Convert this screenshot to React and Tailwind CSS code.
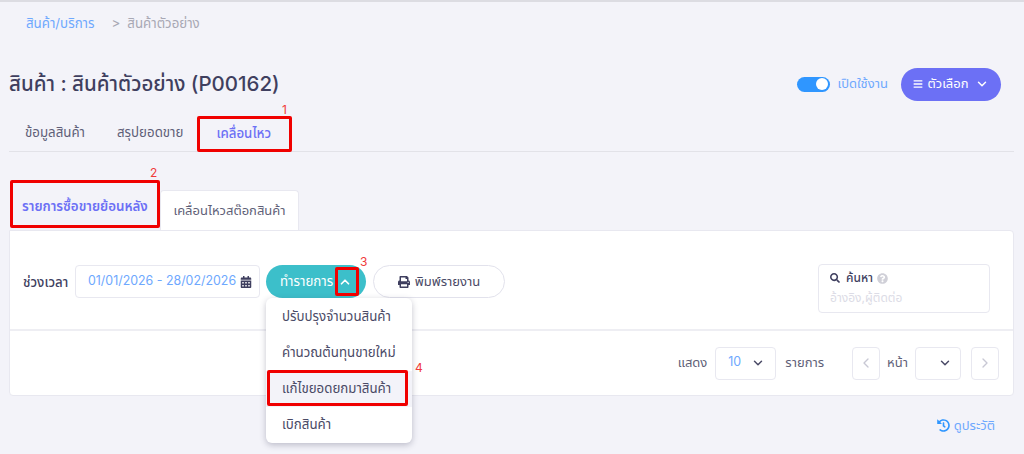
import React from 'react';
import { ChevronDown, ChevronUp, ChevronLeft, ChevronRight } from 'lucide-react';
import { FaBars, FaCalendarAlt, FaHistory, FaPrint, FaQuestionCircle, FaSearch } from 'react-icons/fa';

const thai = "font-['Inter','Noto_Sans','Noto_Sans_Thai','DejaVu_Sans',sans-serif]";

const RedBox = ({ className }) => (
  <div className={`absolute border-[3px] border-[#f00000] rounded-[2px] pointer-events-none z-20 ${className}`}></div>
);

const Mark = ({ children, className }) => (
  <span className={`absolute text-[#f03a3a] text-[12px] leading-none z-20 ${className}`}>{children}</span>
);

const App = () => {
  return (
    <div className={`w-[1024px] h-[454px] overflow-hidden bg-[#f3f3f9] text-[#3f3f5f] ${thai}`}>
      <div className="h-[2px] bg-[#dcdce2]"></div>

      <div className="flex items-center h-[16px] mt-[14px] pl-[26px] text-[13.3px] leading-none">
        <span className="text-[#6ea8fe]">สินค้า/บริการ</span>
        <span className="text-[#a8a8b4] ml-[17px]">&gt;</span>
        <span className="text-[#a8a8b4] ml-[7px]">สินค้าตัวอย่าง</span>
      </div>

      <div className="flex items-center justify-between h-[36px] mt-[34px] pl-[9px] pr-[23px]">
        <h1 className="text-[20.5px] leading-none font-medium text-[#3f3f5f]">สินค้า : สินค้าตัวอย่าง (P00162)</h1>
        <div className="flex items-center">
          <div className="w-[33px] h-[15px] rounded-full bg-[#2f96ff] flex items-center justify-end pr-[2px]">
            <div className="w-[12px] h-[12px] rounded-full bg-white"></div>
          </div>
          <span className="ml-[7px] text-[13px] text-[#6ea8fe]">เปิดใช้งาน</span>
          <button className="ml-[13px] w-[100px] h-[33px] rounded-full bg-[#6c70f5] text-white text-[13px] flex items-center justify-center">
            <FaBars size={10} />
            <span className="ml-[4px]">ตัวเลือก</span>
            <ChevronDown size={14} strokeWidth={2.5} className="ml-[6px]" />
          </button>
        </div>
      </div>

      <div className="relative mx-[9px] mr-[10px] h-[37px] mt-[13px] border-b border-[#e2e2e8] flex items-start text-[13.3px] leading-none">
        <span className="ml-[16px] mt-[11px] text-[#5f5f78]">ข้อมูลสินค้า</span>
        <span className="ml-[32px] mt-[11px] text-[#5f5f78]">สรุปยอดขาย</span>
        <span className="ml-[33px] mt-[12px] text-[#6c70f5] font-medium">เคลื่อนไหว</span>
        <RedBox className="left-[188px] top-[1px] w-[95px] h-[36px]" />
        <Mark className="left-[273px] -top-[11px]">1</Mark>
      </div>

      <div className="relative mx-[9px] mr-[10px] mt-[37px] flex items-end h-[41px] text-[13px] leading-none">
        <div className="w-[151px] h-[41px] flex items-center pl-[13px] pb-[5px] text-[#6c70f5] font-semibold text-[13.3px]">รายการซื้อขายย้อนหลัง</div>
        <div className="w-[139px] h-[40px] bg-white border border-b-0 border-[#e8e8f0] rounded-t-[4px] flex items-center justify-center text-[#5f5f78]">เคลื่อนไหวสต๊อกสินค้า</div>
        <RedBox className="left-[1px] -top-[9px] w-[150px] h-[48px]" />
        <Mark className="left-[141px] -top-[22px]">2</Mark>
      </div>

      <div className="relative mx-[9px] mr-[10px] bg-white border border-[#e8e8f0] rounded-b-[4px] rounded-tr-[4px] h-[166px]">
        <div className="flex items-start h-[100px] border-b-2 border-[#eeeef3] pl-[13px] pr-[23px] pt-[34px]">
          <span className="w-[52px] text-[13.3px] font-medium leading-[34px] text-[#3f3f5f] whitespace-nowrap">ช่วงเวลา</span>
          <div className="w-[185px] h-[33px] border border-[#e8e8f0] rounded-[4px] flex items-center pl-[12px] text-[12.4px] text-[#6ea8fe] whitespace-nowrap">
            01/01/2026 - 28/02/2026
            <FaCalendarAlt size={12} className="ml-[4px] text-[#3f3f5f] shrink-0" />
          </div>
          <div className="relative ml-[6px]">
            <button className="w-[100px] h-[33px] rounded-full bg-[#3cbfca] text-white text-[13.3px] flex items-center pl-[14px]">
              ทำรายการ
              <ChevronUp size={14} strokeWidth={3} className="ml-[5px]" />
            </button>
            <RedBox className="left-[69px] top-[2px] w-[24px] h-[29px]" />
            <Mark className="left-[94px] -top-[9px]">3</Mark>
            <div className="absolute left-0 top-[33px] w-[146px] h-[145px] bg-white rounded-[6px] shadow-[0_2px_6px_rgba(60,60,90,0.3)] text-[13.3px] text-[#4a4a66] z-10">
              <div className="h-[37px] flex items-center pl-[16px]">ปรับปรุงจำนวนสินค้า</div>
              <div className="h-[36px] flex items-center pl-[16px]">คำนวณต้นทุนขายใหม่</div>
              <div className="relative h-[36px] flex items-center pl-[16px] bg-[#f3f3f9]">
                แก้ไขยอดยกมาสินค้า
                <RedBox className="left-[1px] -top-[1px] w-[141px] h-[36px]" />
                <Mark className="left-[149px] -top-[9px]">4</Mark>
              </div>
              <div className="h-[36px] flex items-center pl-[16px]">เบิกสินค้า</div>
            </div>
          </div>
          <button className="ml-[7px] w-[132px] h-[33px] rounded-full border border-[#e2e2ec] bg-white text-[13px] text-[#4a4a66] flex items-center justify-center">
            <FaPrint size={12} className="text-[#3f3f5f]" />
            <span className="ml-[5px]">พิมพ์รายงาน</span>
          </button>
          <div className="ml-auto -mt-[1px] w-[172px] h-[49px] border border-[#e8e8f0] rounded-[4px] pl-[11px] pt-[5px]">
            <div className="flex items-center text-[12px] leading-[16px] font-medium text-[#3f3f5f]">
              <FaSearch size={10} />
              <span className="ml-[6px]">ค้นหา</span>
              <FaQuestionCircle size={11} className="ml-[4px] text-[#d0d0d8]" />
            </div>
            <div className="mt-[4px] text-[12px] leading-[16px] text-[#dcdce6]">อ้างอิง,ผู้ติดต่อ</div>
          </div>
        </div>

        <div className="flex items-center justify-end h-[64px] pr-[14px] text-[13px] text-[#5f5f78]">
          <span>แสดง</span>
          <div className="ml-[8px] w-[61px] h-[33px] border border-[#e8e8f0] rounded-[4px] flex items-center justify-between pl-[12px] pr-[10px] pb-[2px] text-[12.4px] text-[#6ea8fe]">
            10
            <ChevronDown size={14} strokeWidth={2.5} className="text-[#4a4a66] mt-[2px]" />
          </div>
          <span className="ml-[9px]">รายการ</span>
          <div className="ml-[28px] w-[28px] h-[33px] border border-[#e8e8f0] rounded-[4px] flex items-center justify-center">
            <ChevronLeft size={16} className="text-[#c8c8d4]" />
          </div>
          <span className="ml-[7px]">หน้า</span>
          <div className="ml-[7px] w-[46px] h-[33px] border border-[#e8e8f0] rounded-[4px] flex items-center justify-end pr-[8px]">
            <ChevronDown size={14} strokeWidth={2.5} className="text-[#4a4a66]" />
          </div>
          <div className="ml-[10px] w-[28px] h-[33px] border border-[#e8e8f0] rounded-[4px] flex items-center justify-center">
            <ChevronRight size={16} className="text-[#c8c8d4]" />
          </div>
        </div>
      </div>

      <div className="flex items-center justify-end pr-[29px] mt-[20px] text-[13px] text-[#6ea8fe]">
        <FaHistory size={13} className="text-[#2f96ff]" />
        <span className="ml-[4px]">ดูประวัติ</span>
      </div>
    </div>
  );
};

export default App;
